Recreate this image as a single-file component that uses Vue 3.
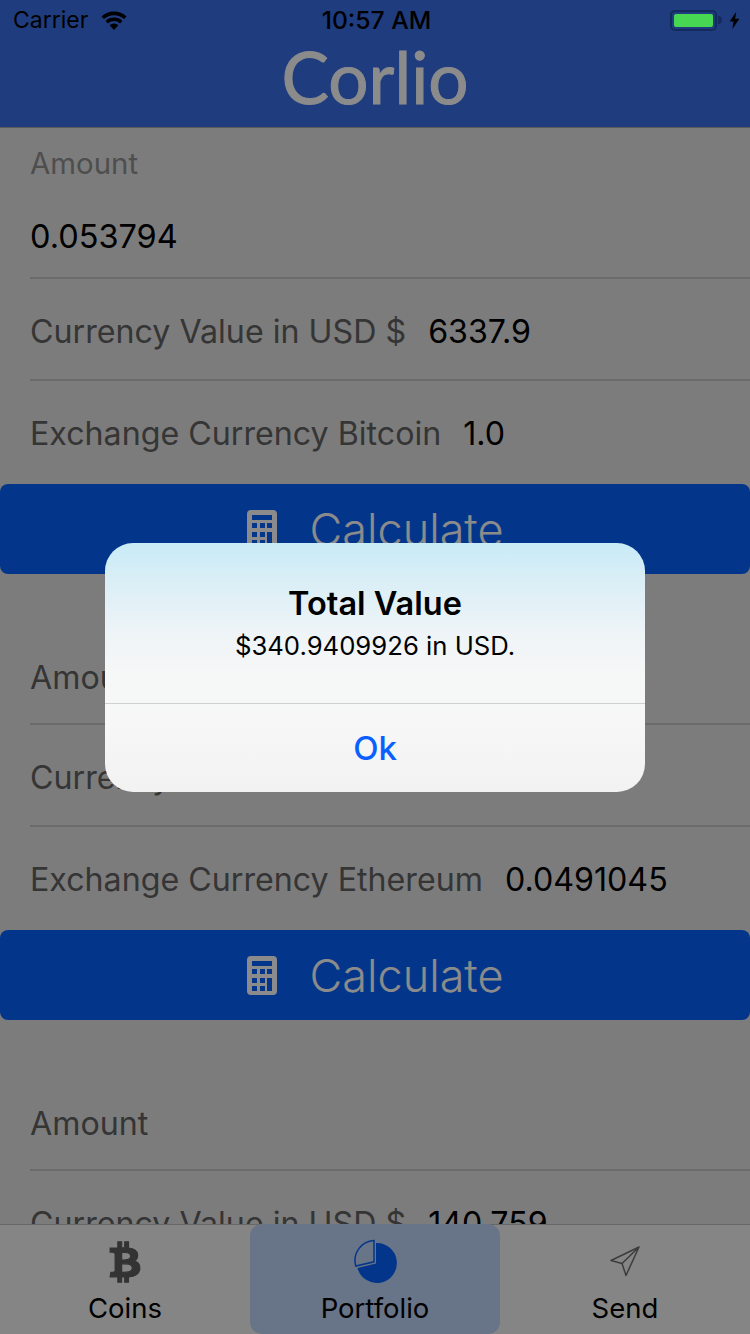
<script setup>
const sections = [
  { label: 'Bitcoin', floating: true, amount: '0.053794', usd: '6337.9', rate: '1.0' },
  { label: 'Ethereum', floating: false, amount: '', usd: '', rate: '0.0491045' },
  { label: 'Litecoin', floating: false, amount: '', usd: '140.759', rate: '' }
]
const btc = 'M310.204 242.638c27.73-14.18 45.377-39.39 41.28-81.3-5.358-57.351-52.458-76.573-114.85-81.929V0h-48.528v77.203c-12.605 0-25.525.315-38.341.63V0h-48.528v79.409c-17.842.539-38.622.276-97.37 0v51.678c38.314-.678 58.417-3.14 63.023 21.427v217.429c-2.925 19.492-18.524 16.685-53.255 16.071L3.765 443.68c88.481 0 97.37.315 97.37.315V512h48.528v-67.06c13.234.315 26.154.315 38.341.315V512h48.213v-68.005c81.299-4.412 135.647-24.894 142.895-101.467 5.671-61.446-23.32-88.862-69.911-99.89zM150.608 134.553c27.415 0 113.126-8.507 113.126 48.528 0 54.515-85.71 48.212-113.126 48.212v-96.74zm0 251.776V279.821c32.772 0 133.127-9.138 133.127 53.255-.001 60.186-100.355 53.253-133.127 53.253z'
</script>

<template>
  <div class="app">
    <header class="header">
      <div class="status">
        <div class="status-left">
          <span>Carrier</span>
          <svg class="wifi" viewBox="0 0 30 20" width="30" height="20">
            <path d="M15 20 10.6 15.2a6.4 6.4 0 0 1 8.8 0Z" />
            <path d="M8.900 13.400 6.600 10.900a12.400 12.400 0 0 1 16.800 0l-2.300 2.500a9 9 0 0 0-12.200 0Z" />
            <path d="M4.900 9.100 2.500 6.500a18.400 18.400 0 0 1 25 0l-2.400 2.600a15 15 0 0 0-20.200 0Z" />
          </svg>
        </div>
        <span class="time">10:57 AM</span>
        <div class="status-right">
          <span class="battery"><i></i></span>
          <span class="nub"></span>
          <svg class="bolt" viewBox="0 0 10 16" width="11" height="19">
            <path d="M6.600 0 0.600 9h3.500L3 16l6.400-9.600H5.600Z" />
          </svg>
        </div>
      </div>
      <h1 class="brand">Corlio</h1>
    </header>

    <main class="content">
      <section v-for="s in sections" :key="s.label" class="section">
        <div v-if="s.floating" class="field field-floating">
          <span class="float-label">Amount</span>
          <span class="value">{{ s.amount }}</span>
        </div>
        <div v-else class="field field-amount">
          <span class="label">Amount</span>
        </div>
        <div class="field field-usd">
          <span class="label">Currency Value in USD $</span>
          <span class="value">{{ s.usd }}</span>
        </div>
        <div class="field field-rate">
          <span class="label">Exchange Currency {{ s.label }}</span>
          <span class="value">{{ s.rate }}</span>
        </div>
        <button class="calc" type="button">
          <svg class="calc-icon" viewBox="0 0 30 39" width="30" height="39">
            <path fill-rule="evenodd" d="M4 0h22a4 4 0 0 1 4 4v31a4 4 0 0 1-4 4H4a4 4 0 0 1-4-4V4a4 4 0 0 1 4-4ZM5 5v5h20V5ZM5 13v5h5v-5Zm8 0v5h5v-5Zm7 0v5h5v-5ZM5 22v5h5v-5Zm8 0v5h5v-5Zm7 0v13h5V22ZM5 30v5h5v-5Zm8 0v5h5v-5Z" />
          </svg>
          <span>Calculate</span>
        </button>
      </section>
    </main>

    <nav class="tabs">
      <div class="tab">
        <svg class="tab-icon" viewBox="-10 -10 404 532" width="32" height="44"><path :d="btc" fill="#5e5e5e" stroke="#5e5e5e" stroke-width="14" /></svg>
        <span>Coins</span>
      </div>
      <div class="tab active">
        <svg class="tab-icon" viewBox="0 0 44 44" width="44" height="44">
          <path d="M23 4A20 20 0 1 1 4.500 29L23 24.500Z" fill="#0663ff" />
          <path d="M21 1.500A20 20 0 0 0 2.800 27L21 22.800Z" fill="none" stroke="#0663ff" stroke-width="1.500" />
        </svg>
        <span>Portfolio</span>
      </div>
      <div class="tab">
        <svg class="tab-icon" viewBox="0 0 44 44" width="44" height="44">
          <path d="M36 7 8 20.500 19 23.500 23 35.500Z M36 7 19 23.500" fill="none" stroke="#6e6e6e" stroke-width="1.500" stroke-linejoin="round" />
        </svg>
        <span>Send</span>
      </div>
    </nav>

    <div class="scrim">
      <div class="alert">
        <div class="alert-body">
          <h2 class="alert-title">Total Value</h2>
          <p class="alert-msg">$340.9409926 in USD.</p>
        </div>
        <div class="alert-action">Ok</div>
      </div>
    </div>
  </div>
</template>

<style>
html, body { margin: 0; padding: 0; }
</style>

<style scoped>
.app {
  position: relative;
  width: 750px;
  height: 1334px;
  display: flex;
  flex-direction: column;
  overflow: hidden;
  background: #e4e4e5;
  font-family: Inter, "Liberation Sans", sans-serif;
  color: #000;
}
.header {
  height: 127px;
  flex: none;
  background: #3a6fe9;
  border-bottom: 1px solid #a8a8a8;
  display: flex;
  flex-direction: column;
  align-items: center;
}
.status {
  position: relative;
  z-index: 20;
  width: 100%;
  height: 40px;
  flex: none;
  box-sizing: border-box;
  padding: 0 10px 0 13px;
  display: grid;
  grid-template-columns: 1fr auto 1fr;
  align-items: center;
  font-size: 23px;
  color: #000;
}
.status-left { display: flex; align-items: center; gap: 11px; }
.wifi { fill: #000; }
.time { font-weight: 500; font-size: 24.700px; }
.status-right { display: flex; align-items: center; justify-content: flex-end; }
.battery {
  width: 47px;
  height: 21px;
  box-sizing: border-box;
  border: 2px solid #142a5c;
  border-radius: 5px;
  padding: 2px;
  display: flex;
}
.battery i { flex: 1; background: #47d752; border-radius: 2px; }
.nub { width: 4px; height: 8px; background: #142a5c; border-radius: 0 4px 4px 0; margin: 0 7px 0 1px; }
.bolt { fill: #000; }
.brand {
  margin: -2px 0 0;
  font-family: Lato, "Liberation Sans", sans-serif;
  font-weight: 400;
  font-size: 71px;
  line-height: 78px;
  color: #fff;
  -webkit-text-stroke: 1px #fff;
}
.content { flex: 1; min-height: 0; overflow: hidden; }
.section { padding-top: 49px; }
.section:first-child { padding-top: 0; }
.field {
  height: 102px;
  box-sizing: border-box;
  margin-left: 30px;
  border-bottom: 2px solid #c4c4c4;
  display: flex;
  align-items: center;
  gap: 22px;
  font-size: 32.200px;
}
.field-amount { padding-top: 8px; }
.field-usd { padding-top: 4px; }
.field-rate { border-bottom: none; height: 103px; padding-top: 2px; }
.field-floating {
  height: 151px;
  flex-direction: column;
  align-items: flex-start;
  gap: 0;
}
.float-label { font-size: 29.400px; line-height: 36px; margin-top: 18px; color: #909090; }
.field-floating .value { margin-top: 35px; font-size: 32.500px; line-height: 40px; }
.label { color: #626262; }
.value { color: #000; }
.calc {
  width: 100%;
  height: 90px;
  display: flex;
  align-items: center;
  justify-content: center;
  gap: 33px;
  border: 0;
  border-radius: 8px;
  background: #0663ff;
  color: #fff;
  font-family: Inter, "Liberation Sans", sans-serif;
  font-weight: 300;
  font-size: 45px;
  padding: 0;
}
.calc-icon { fill: #fff; }
.tabs {
  flex: none;
  height: 110px;
  box-sizing: border-box;
  border-top: 1px solid #bdbdbd;
  background: #f4f4f4;
  display: grid;
  grid-template-columns: repeat(3, 250px);
  position: relative;
}
.tab {
  display: flex;
  flex-direction: column;
  align-items: center;
  font-size: 27.500px;
  line-height: 32px;
}
.tab-icon { margin-top: 15px; height: 44px; }
.tab span { margin-top: 8px; }
.active { background: #bfd5f8; border-radius: 12px; margin-top: -1px; }
.active span { margin-top: 9px; }
.scrim {
  position: absolute;
  inset: 0;
  z-index: 10;
  background: rgba(0, 0, 0, 0.455);
  display: flex;
  align-items: center;
  justify-content: center;
}
.alert {
  width: 540px;
  height: 249px;
  border-radius: 28px;
  overflow: hidden;
  background: linear-gradient(180deg, #c8ebf7 0%, #d9eef6 14%, #eef4f7 36%, #f6f7f7 52%, #f7f7f7 72%, #f2f2f2 100%);
  display: flex;
  flex-direction: column;
  text-align: center;
}
.alert-body { height: 161px; flex: none; box-sizing: border-box; border-bottom: 1px solid #cfcfcf; padding-top: 39px; }
.alert-title { margin: 0; font-size: 32.500px; line-height: 44px; font-weight: 600; }
.alert-msg { margin: 2px 0 0; font-size: 25.700px; line-height: 36px; font-weight: 400; }
.alert-action { flex: 1; display: flex; align-items: center; justify-content: center; color: #0a60ff; font-size: 33px; font-weight: 500; }
</style>
